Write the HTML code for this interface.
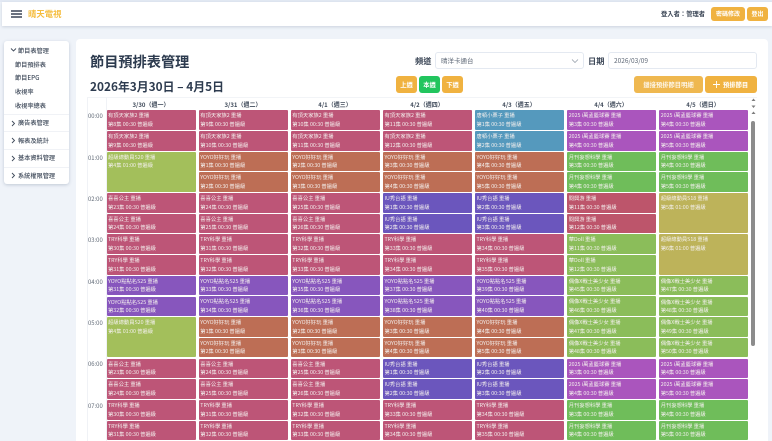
<!DOCTYPE html>
<html lang="zh-Hant"><head><meta charset="utf-8"><title>節目預排表管理</title>
<style>
*{box-sizing:border-box;margin:0;padding:0}
html,body{width:772px;height:441px;overflow:hidden;background:#eff3f9;font-family:"Noto Sans CJK TC","Liberation Sans",sans-serif;color:#2d3b4f}
#r{position:absolute;left:0;top:0;width:772px;height:441px;overflow:hidden;filter:blur(.35px)}
.a{position:absolute;white-space:nowrap}
.hd{left:2px;top:2px;width:770px;height:24px;background:#fff;box-shadow:0 1px 3px rgba(60,80,110,.2)}
.bar{left:11px;width:11px;height:1.6px;background:#6b7280}
.side{left:4px;top:41px;width:65px;height:143px;background:#fff;border-radius:3px;box-shadow:0 1px 3px rgba(60,80,110,.25)}
.mi{font-size:6.2px;line-height:8px;font-weight:500;color:#3f4a5a}
.dv{left:4px;width:65px;height:1px;background:#f0f2f6}
.main{left:76px;top:39px;width:692px;height:402px;background:#fff;border-radius:4px 4px 0 0}
.btn{background:#f0b240;color:#fff;border-radius:3px;text-align:center;font-weight:700;font-size:6.3px}
.inp{background:#fff;border:1px solid #e4e9f1;border-radius:3px;height:17px;top:52px;font-size:6.5px;line-height:15px;padding-left:5px;color:#606a78}
.lab{font-size:8.2px;font-weight:700;top:55px;line-height:12px;color:#3b4656}
.h{top:100px;width:92px;text-align:center;font-size:6px;line-height:9px;font-weight:700;color:#3f4a5a}
.t{left:88px;width:17px;font-size:5.9px;line-height:8px;color:#5f6875}
.col{position:absolute;top:110.3px;width:89px}
.col div{height:19.6px;margin-bottom:1.1px;border-radius:1px;color:#f4f0ee;font-size:5.3px;line-height:8.6px;padding:1px 0 0 1.5px;white-space:nowrap;overflow:hidden}
.col div.s{height:40.3px}
.p{background:#bd5577}.g{background:#a3bf5b}.o{background:#bd6e55}.v{background:#8756bd}.i{background:#6b56bd}.b{background:#5599bd}.m{background:#aa55bd}.n{background:#6fbd5a}.r{background:#bd556b}.l{background:#8bbd5a}.y{background:#bdb35a}
</style></head><body><div id="r">
<div class="a" style="left:0;top:0;width:772px;height:2px;background:#e3e9f4"></div>
<div class="a hd"></div>
<div class="a bar" style="top:10px"></div><div class="a bar" style="top:13px"></div><div class="a bar" style="top:16px"></div>
<div class="a" style="left:28px;top:8px;font-size:8.4px;line-height:12px;font-weight:700;color:#f5bd3f">晴天電視</div>
<div class="a" style="left:661px;top:10px;font-size:6.3px;line-height:8px;font-weight:700;color:#3b4656">登入者：管理者</div>
<div class="a btn" style="left:711px;top:7px;width:34px;height:14px;line-height:14px;font-size:6px">密碼修改</div>
<div class="a btn" style="left:747px;top:7px;width:21px;height:14px;line-height:14px;font-size:6px">登出</div>

<div class="a side"></div>
<svg class="a" style="left:10px;top:47px" width="7" height="6" viewBox="0 0 7 6"><path d="M1 1.500 3.500 4 6 1.500" fill="none" stroke="#3f4a5a" stroke-width=".9"/></svg>
<div class="a mi" style="left:18px;top:46.500px">節目表管理</div>
<div class="a mi" style="left:15px;top:60.500px">節目預排表</div>
<div class="a mi" style="left:15px;top:74px">節目EPG</div>
<div class="a mi" style="left:15px;top:87.500px">收視率</div>
<div class="a mi" style="left:15px;top:101.500px">收視率總表</div>
<div class="a dv" style="top:114px"></div><div class="a dv" style="top:131px"></div><div class="a dv" style="top:149px"></div><div class="a dv" style="top:167px"></div>
<svg class="a" style="left:10px;top:120px" width="6" height="7" viewBox="0 0 6 7"><path d="M2 1 4.500 3.500 2 6" fill="none" stroke="#3f4a5a" stroke-width=".9"/></svg>
<div class="a mi" style="left:18px;top:119px">廣告表管理</div>
<svg class="a" style="left:10px;top:137px" width="6" height="7" viewBox="0 0 6 7"><path d="M2 1 4.500 3.500 2 6" fill="none" stroke="#3f4a5a" stroke-width=".9"/></svg>
<div class="a mi" style="left:18px;top:136.500px">報表及統計</div>
<svg class="a" style="left:10px;top:155px" width="6" height="7" viewBox="0 0 6 7"><path d="M2 1 4.500 3.500 2 6" fill="none" stroke="#3f4a5a" stroke-width=".9"/></svg>
<div class="a mi" style="left:18px;top:154px">基本資料管理</div>
<svg class="a" style="left:10px;top:172px" width="6" height="7" viewBox="0 0 6 7"><path d="M2 1 4.500 3.500 2 6" fill="none" stroke="#3f4a5a" stroke-width=".9"/></svg>
<div class="a mi" style="left:18px;top:172px">系統權限管理</div>

<div class="a main"></div>
<div class="a" style="left:90px;top:51.500px;font-size:14.200px;line-height:20px;font-weight:700;color:#2d3b4f">節目預排表管理</div>
<div class="a" style="left:90px;top:77.500px;font-size:11.850px;line-height:17px;font-weight:700;color:#2d3b4f">2026年3月30日 – 4月5日</div>
<div class="a lab" style="left:415px">頻道</div>
<div class="a inp" style="left:435px;width:149px">晴洋卡通台</div>
<svg class="a" style="left:571px;top:58px" width="8" height="6" viewBox="0 0 8 6"><path d="M1 1.500 4 4.500 7 1.500" fill="none" stroke="#8a93a0" stroke-width=".7"/></svg>
<div class="a lab" style="left:588px">日期</div>
<div class="a inp" style="left:608px;width:149px">2026/03/09</div>
<div class="a btn" style="left:396px;top:76px;width:21px;height:17px;line-height:17px">上週</div>
<div class="a btn" style="left:419px;top:76px;width:21px;height:17px;line-height:17px;background:#22c55e">本週</div>
<div class="a btn" style="left:442px;top:76px;width:21px;height:17px;line-height:17px">下週</div>
<div class="a btn" style="left:634px;top:76px;width:69px;height:17px;line-height:17px;background:#efb850;font-weight:500">鏈接預排節目明細</div>
<div class="a btn" style="left:705px;top:76px;width:52px;height:17px;line-height:17px;padding-left:18px;text-align:left">預排節目</div>
<svg class="a" style="left:712px;top:80px" width="9" height="9" viewBox="0 0 9 9"><path d="M4.500 1V8M1 4.500H8" stroke="#fff" stroke-width=".9"/></svg>

<div class="a" style="left:86.500px;top:97px;width:670px;height:344px;border-left:1px solid #f0f2f6;border-top:1px solid #f2f4f7"></div>
<div class="a" style="left:105.500px;top:97px;width:1px;height:344px;background:#f0f2f6"></div>
<div class="a h" style="left:105px">3/30（週一）</div>
<div class="a h" style="left:197px">3/31（週二）</div>
<div class="a h" style="left:289px">4/1（週三）</div>
<div class="a h" style="left:381px">4/2（週四）</div>
<div class="a h" style="left:473px">4/3（週五）</div>
<div class="a h" style="left:565px">4/4（週六）</div>
<div class="a h" style="left:657px">4/5（週日）</div>
<div class="a t" style="top:112px">00:00</div>
<div class="a t" style="top:153.500px">01:00</div>
<div class="a t" style="top:195px">02:00</div>
<div class="a t" style="top:236.300px">03:00</div>
<div class="a t" style="top:277.600px">04:00</div>
<div class="a t" style="top:319px">05:00</div>
<div class="a t" style="top:360.300px">06:00</div>
<div class="a t" style="top:401.600px">07:00</div>

<section class="col" style="left:106.500px">
<div class="p">有頂天家族2 重播<br>第8集 00:30 普遍級</div>
<div class="p">有頂天家族2 重播<br>第9集 00:30 普遍級</div>
<div class="g s">超級總動員S20 重播<br>第4集 01:00 普遍級</div>
<div class="p">喜喜公主 重播<br>第23集 00:30 普遍級</div>
<div class="p">喜喜公主 重播<br>第24集 00:30 普遍級</div>
<div class="p">TRY科學 重播<br>第30集 00:30 普遍級</div>
<div class="p">TRY科學 重播<br>第31集 00:30 普遍級</div>
<div class="v">YOYO點點名S25 重播<br>第31集 00:30 普遍級</div>
<div class="v">YOYO點點名S25 重播<br>第32集 00:30 普遍級</div>
<div class="g s">超級總動員S20 重播<br>第4集 01:00 普遍級</div>
<div class="p">喜喜公主 重播<br>第23集 00:30 普遍級</div>
<div class="p">喜喜公主 重播<br>第24集 00:30 普遍級</div>
<div class="p">TRY科學 重播<br>第30集 00:30 普遍級</div>
<div class="p">TRY科學 重播<br>第31集 00:30 普遍級</div>
</section>
<section class="col" style="left:198.800px">
<div class="p">有頂天家族2 重播<br>第9集 00:30 普遍級</div>
<div class="p">有頂天家族2 重播<br>第10集 00:30 普遍級</div>
<div class="o">YOYO好好玩 重播<br>第1集 00:30 普遍級</div>
<div class="o">YOYO好好玩 重播<br>第2集 00:30 普遍級</div>
<div class="p">喜喜公主 重播<br>第24集 00:30 普遍級</div>
<div class="p">喜喜公主 重播<br>第25集 00:30 普遍級</div>
<div class="p">TRY科學 重播<br>第31集 00:30 普遍級</div>
<div class="p">TRY科學 重播<br>第32集 00:30 普遍級</div>
<div class="v">YOYO點點名S25 重播<br>第33集 00:30 普遍級</div>
<div class="v">YOYO點點名S25 重播<br>第34集 00:30 普遍級</div>
<div class="o">YOYO好好玩 重播<br>第1集 00:30 普遍級</div>
<div class="o">YOYO好好玩 重播<br>第2集 00:30 普遍級</div>
<div class="p">喜喜公主 重播<br>第24集 00:30 普遍級</div>
<div class="p">喜喜公主 重播<br>第25集 00:30 普遍級</div>
<div class="p">TRY科學 重播<br>第31集 00:30 普遍級</div>
<div class="p">TRY科學 重播<br>第32集 00:30 普遍級</div>
</section>
<section class="col" style="left:290.800px">
<div class="p">有頂天家族2 重播<br>第10集 00:30 普遍級</div>
<div class="p">有頂天家族2 重播<br>第11集 00:30 普遍級</div>
<div class="o">YOYO好好玩 重播<br>第2集 00:30 普遍級</div>
<div class="o">YOYO好好玩 重播<br>第3集 00:30 普遍級</div>
<div class="p">喜喜公主 重播<br>第25集 00:30 普遍級</div>
<div class="p">喜喜公主 重播<br>第26集 00:30 普遍級</div>
<div class="p">TRY科學 重播<br>第32集 00:30 普遍級</div>
<div class="p">TRY科學 重播<br>第33集 00:30 普遍級</div>
<div class="v">YOYO點點名S25 重播<br>第35集 00:30 普遍級</div>
<div class="v">YOYO點點名S25 重播<br>第36集 00:30 普遍級</div>
<div class="o">YOYO好好玩 重播<br>第2集 00:30 普遍級</div>
<div class="o">YOYO好好玩 重播<br>第3集 00:30 普遍級</div>
<div class="p">喜喜公主 重播<br>第25集 00:30 普遍級</div>
<div class="p">喜喜公主 重播<br>第26集 00:30 普遍級</div>
<div class="p">TRY科學 重播<br>第32集 00:30 普遍級</div>
<div class="p">TRY科學 重播<br>第33集 00:30 普遍級</div>
</section>
<section class="col" style="left:383px">
<div class="p">有頂天家族2 重播<br>第11集 00:30 普遍級</div>
<div class="p">有頂天家族2 重播<br>第12集 00:30 普遍級</div>
<div class="o">YOYO好好玩 重播<br>第3集 00:30 普遍級</div>
<div class="o">YOYO好好玩 重播<br>第4集 00:30 普遍級</div>
<div class="i">IU秀台語 重播<br>第1集 00:30 普遍級</div>
<div class="i">IU秀台語 重播<br>第2集 00:30 普遍級</div>
<div class="p">TRY科學 重播<br>第33集 00:30 普遍級</div>
<div class="p">TRY科學 重播<br>第34集 00:30 普遍級</div>
<div class="v">YOYO點點名S25 重播<br>第37集 00:30 普遍級</div>
<div class="v">YOYO點點名S25 重播<br>第38集 00:30 普遍級</div>
<div class="o">YOYO好好玩 重播<br>第3集 00:30 普遍級</div>
<div class="o">YOYO好好玩 重播<br>第4集 00:30 普遍級</div>
<div class="i">IU秀台語 重播<br>第1集 00:30 普遍級</div>
<div class="i">IU秀台語 重播<br>第2集 00:30 普遍級</div>
<div class="p">TRY科學 重播<br>第33集 00:30 普遍級</div>
<div class="p">TRY科學 重播<br>第34集 00:30 普遍級</div>
</section>
<section class="col" style="left:475px">
<div class="b">唐頓小栗子 重播<br>第1集 00:30 普遍級</div>
<div class="b">唐頓小栗子 重播<br>第2集 00:30 普遍級</div>
<div class="o">YOYO好好玩 重播<br>第4集 00:30 普遍級</div>
<div class="o">YOYO好好玩 重播<br>第5集 00:30 普遍級</div>
<div class="i">IU秀台語 重播<br>第2集 00:30 普遍級</div>
<div class="i">IU秀台語 重播<br>第3集 00:30 普遍級</div>
<div class="p">TRY科學 重播<br>第34集 00:30 普遍級</div>
<div class="p">TRY科學 重播<br>第35集 00:30 普遍級</div>
<div class="v">YOYO點點名S25 重播<br>第39集 00:30 普遍級</div>
<div class="v">YOYO點點名S25 重播<br>第40集 00:30 普遍級</div>
<div class="o">YOYO好好玩 重播<br>第4集 00:30 普遍級</div>
<div class="o">YOYO好好玩 重播<br>第5集 00:30 普遍級</div>
<div class="i">IU秀台語 重播<br>第2集 00:30 普遍級</div>
<div class="i">IU秀台語 重播<br>第3集 00:30 普遍級</div>
<div class="p">TRY科學 重播<br>第34集 00:30 普遍級</div>
<div class="p">TRY科學 重播<br>第35集 00:30 普遍級</div>
</section>
<section class="col" style="left:567.200px">
<div class="m">2025 i萬孟籃球賽 重播<br>第3集 00:30 普遍級</div>
<div class="m">2025 i萬孟籃球賽 重播<br>第4集 00:30 普遍級</div>
<div class="n">月刊妄想科學 重播<br>第3集 00:30 普遍級</div>
<div class="n">月刊妄想科學 重播<br>第4集 00:30 普遍級</div>
<div class="r">閱興游 重播<br>第11集 00:30 普遍級</div>
<div class="r">閱興游 重播<br>第12集 00:30 普遍級</div>
<div class="l">華Doll 重播<br>第11集 00:30 普遍級</div>
<div class="l">華Doll 重播<br>第12集 00:30 普遍級</div>
<div class="l">偶像X戰士美少女 重播<br>第45集 00:30 普遍級</div>
<div class="l">偶像X戰士美少女 重播<br>第46集 00:30 普遍級</div>
<div class="l">偶像X戰士美少女 重播<br>第47集 00:30 普遍級</div>
<div class="l">偶像X戰士美少女 重播<br>第48集 00:30 普遍級</div>
<div class="m">2025 i萬孟籃球賽 重播<br>第3集 00:30 普遍級</div>
<div class="m">2025 i萬孟籃球賽 重播<br>第4集 00:30 普遍級</div>
<div class="n">月刊妄想科學 重播<br>第3集 00:30 普遍級</div>
<div class="n">月刊妄想科學 重播<br>第4集 00:30 普遍級</div>
</section>
<section class="col" style="left:659.200px">
<div class="m">2025 i萬孟籃球賽 重播<br>第4集 00:30 普遍級</div>
<div class="m">2025 i萬孟籃球賽 重播<br>第5集 00:30 普遍級</div>
<div class="n">月刊妄想科學 重播<br>第4集 00:30 普遍級</div>
<div class="n">月刊妄想科學 重播<br>第5集 00:30 普遍級</div>
<div class="y s">超級總動員S18 重播<br>第5集 01:00 普遍級</div>
<div class="y s">超級總動員S18 重播<br>第6集 01:00 普遍級</div>
<div class="l">偶像X戰士美少女 重播<br>第47集 00:30 普遍級</div>
<div class="l">偶像X戰士美少女 重播<br>第48集 00:30 普遍級</div>
<div class="l">偶像X戰士美少女 重播<br>第49集 00:30 普遍級</div>
<div class="l">偶像X戰士美少女 重播<br>第50集 00:30 普遍級</div>
<div class="m">2025 i萬孟籃球賽 重播<br>第4集 00:30 普遍級</div>
<div class="m">2025 i萬孟籃球賽 重播<br>第5集 00:30 普遍級</div>
<div class="n">月刊妄想科學 重播<br>第4集 00:30 普遍級</div>
<div class="n">月刊妄想科學 重播<br>第5集 00:30 普遍級</div>
</section>

<svg class="a" style="left:750px;top:97px" width="7" height="24" viewBox="0 0 7 24"><path d="M3.500 1.500 5.500 4H1.500ZM1.500 8.500H5.500L3.500 11ZM3.500 14.500 5.500 17H1.500Z" fill="#7d7d7d"/></svg>
<div class="a" style="left:750.700px;top:121px;width:4.600px;height:225px;background:#8c8c8c;border-radius:2.300px"></div>
</div></body></html>
